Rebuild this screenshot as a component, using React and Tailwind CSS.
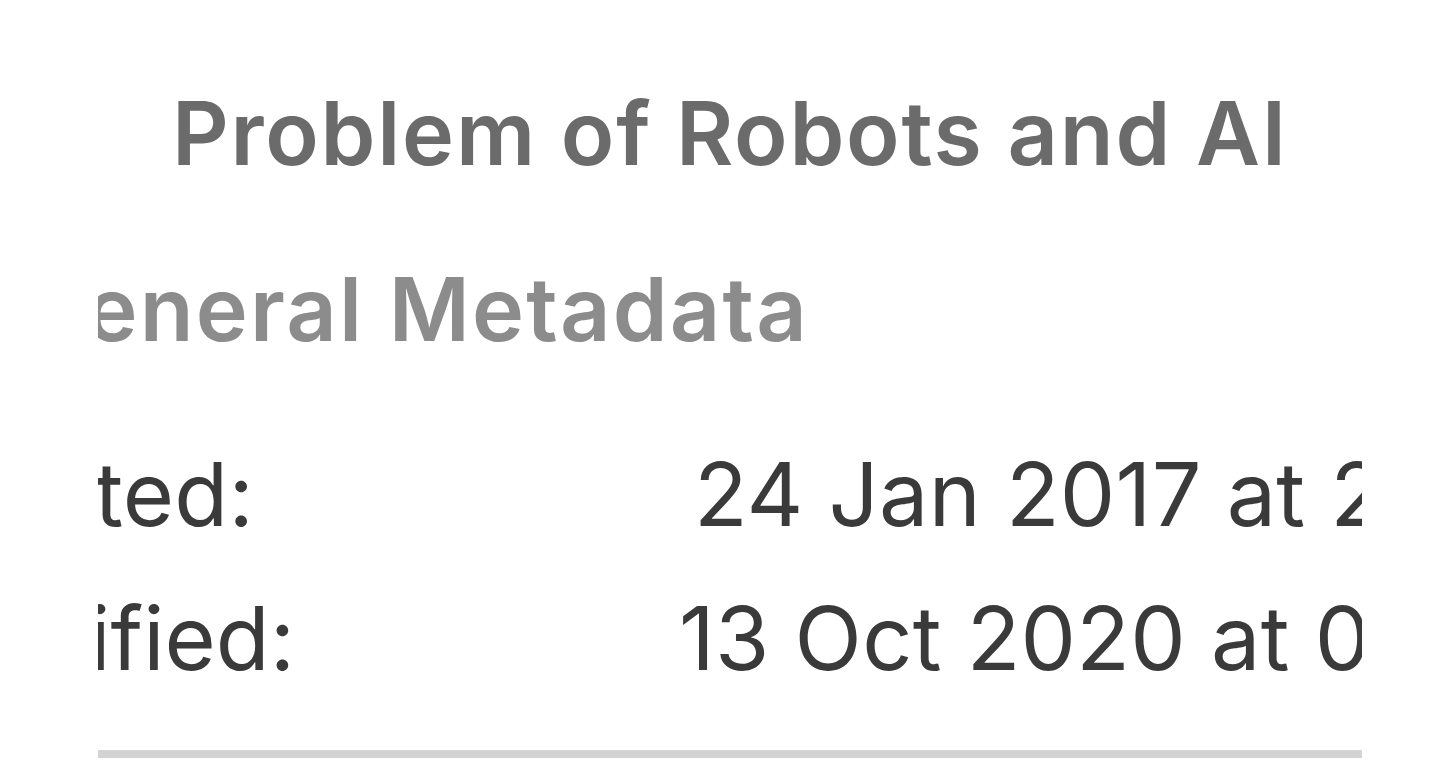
export default function App() {
  return (
    <div className="w-[1444px] h-[762px] overflow-hidden bg-white font-['Inter',sans-serif] tracking-[0.015em]">
      <div className="ml-[98px] w-[1264px] overflow-hidden">
        {/* file name */}
        <h1 className="pt-[89px] text-center text-[88px] leading-none font-semibold tracking-[0.02em] text-[#6b6b6b] whitespace-nowrap">
          Problem of Robots and AI
        </h1>

        {/* section header, clipped on the left */}
        <div className="mt-[88px] flex w-[711px] justify-end overflow-hidden">
          <span className="text-[88px] leading-none font-semibold tracking-[0.025em] text-[#8c8c8c] whitespace-nowrap">
            General Metadata
          </span>
        </div>

        {/* rows */}
        <div className="mt-[97px] flex items-start">
          <div className="flex w-[156px] shrink-0 justify-end overflow-hidden">
            <span className="text-[88px] leading-none text-[#3a3a3a] whitespace-nowrap">Created:</span>
          </div>
          <span className="ml-[440px] text-[88px] leading-none text-[#3a3a3a] whitespace-nowrap">
            24 Jan 2017 at 21:14
          </span>
        </div>
        <div className="mt-[56px] flex items-start">
          <div className="flex w-[197px] shrink-0 justify-end overflow-hidden">
            <span className="text-[88px] leading-none tracking-normal text-[#3a3a3a] whitespace-nowrap">Modified:</span>
          </div>
          <span className="ml-[384px] text-[88px] leading-none text-[#3a3a3a] whitespace-nowrap">
            13 Oct 2020 at 09:32
          </span>
        </div>

        <div className="mt-[68px] h-[8px] bg-[#d3d3d3]" />
      </div>
    </div>
  )
}
